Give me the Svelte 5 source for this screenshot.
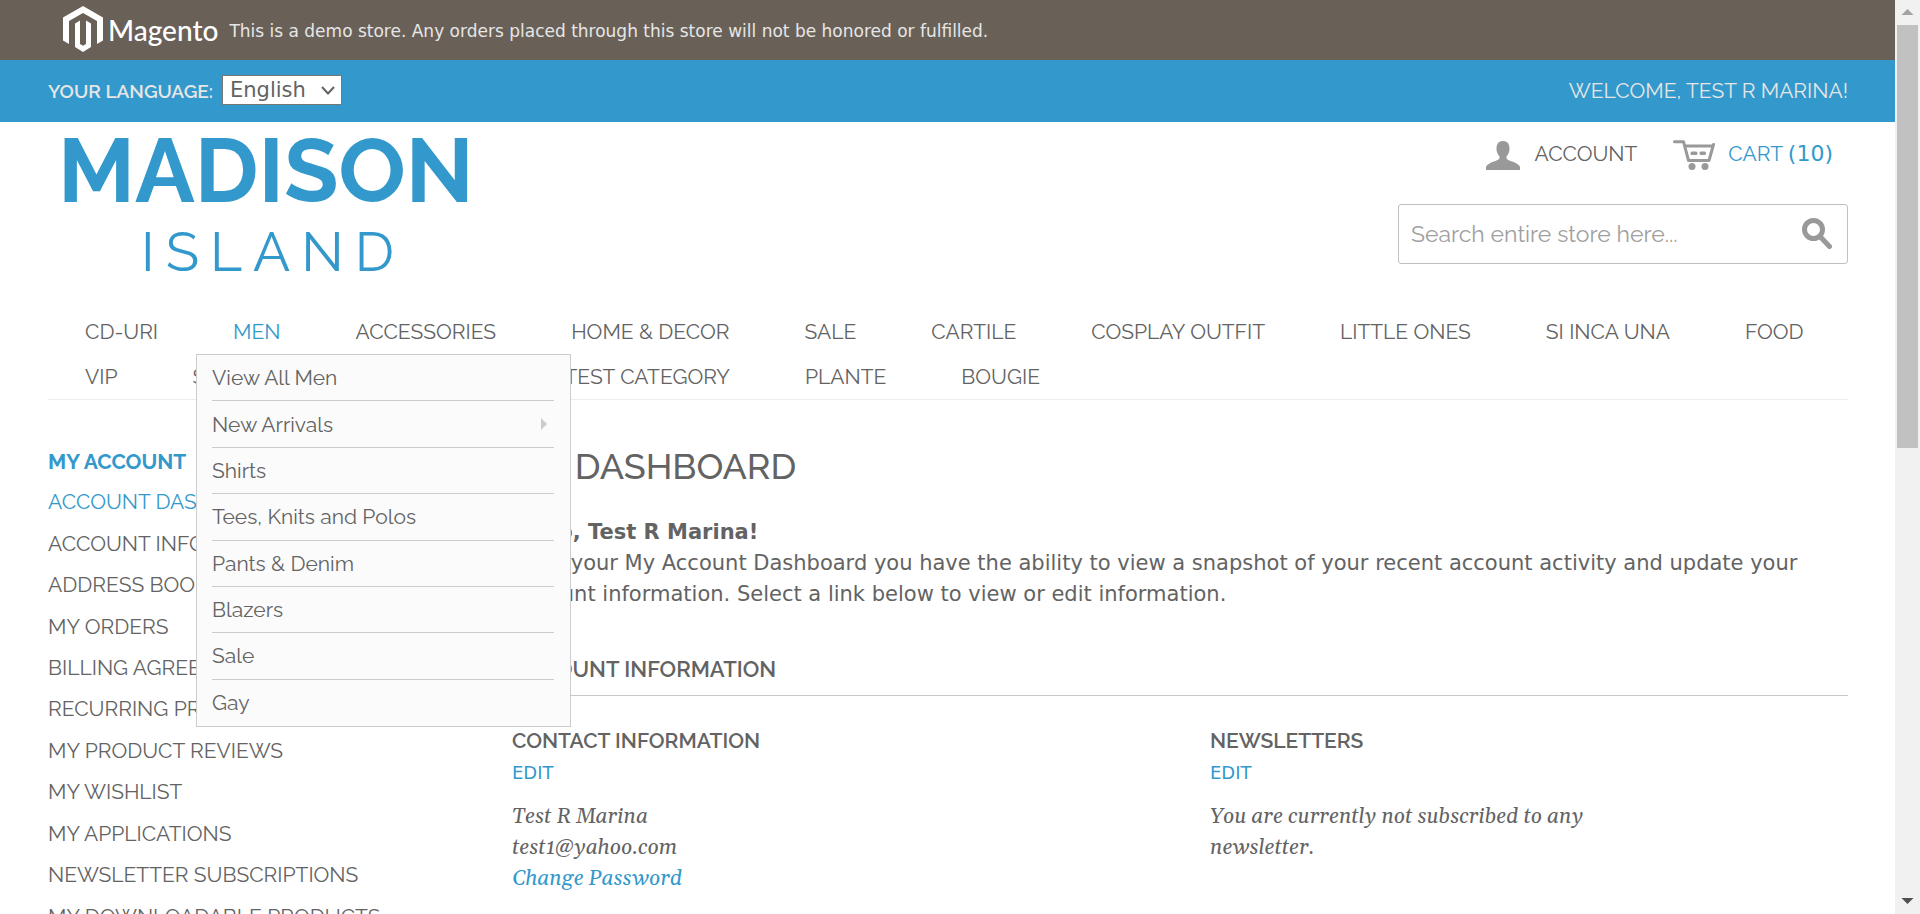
<script>
  const nav = [
    'CD-URI', 'MEN', 'ACCESSORIES', 'HOME & DECOR', 'SALE', 'CARTILE', 'COSPLAY OUTFIT',
    'LITTLE ONES', 'SI INCA UNA', 'FOOD', 'VIP', 'SPECIAL OFFERS', 'TOYS', 'TEST CATEGORY', 'PLANTE', 'BOUGIE'
  ];
  const menMenu = [
    'View All Men', 'New Arrivals', 'Shirts', 'Tees, Knits and Polos',
    'Pants & Denim', 'Blazers', 'Sale', 'Gay'
  ];
  const accountLinks = [
    'ACCOUNT DASHBOARD', 'ACCOUNT INFORMATION', 'ADDRESS BOOK', 'MY ORDERS', 'BILLING AGREEMENTS',
    'RECURRING PROFILES', 'MY PRODUCT REVIEWS', 'MY WISHLIST', 'MY APPLICATIONS',
    'NEWSLETTER SUBSCRIPTIONS', 'MY DOWNLOADABLE PRODUCTS'
  ];
  let language = $state('English');
  let query = $state('');
</script>

<div class="window">
  <div class="page">
    <div class="notice">
      <svg class="mark" width="40" height="46" viewBox="0 0 40 46" aria-hidden="true">
        <path fill="#fff" d="M20 0 40 11.500V34.500L34 38V15L20 7 6 15V38L0 34.500V11.500Z" />
        <path fill="#fff" d="M12 17.500 17 14.600V38L20 39.800 23 38V14.600L28 17.500V41L20 46 12 41Z" />
      </svg>
      <span class="wordmark">Magento</span>
      <p>This is a demo store. Any orders placed through this store will not be honored or fulfilled.</p>
    </div>

    <div class="langbar">
      <div class="wrap bar">
        <div class="lang">
          <label for="lang">YOUR LANGUAGE:</label>
          <span class="selectbox">
            <select id="lang" bind:value={language}>
              <option>English</option>
              <option>French</option>
              <option>German</option>
            </select>
            <svg width="14" height="9" viewBox="0 0 14 9" aria-hidden="true"><path d="M1 1 7 7.500 13 1" fill="none" stroke="#636363" stroke-width="2" /></svg>
          </span>
        </div>
        <p>WELCOME, TEST R MARINA!</p>
      </div>
    </div>

    <header class="wrap header">
      <a class="logo" href="#home">
        <span class="madison">MADISON</span>
        <span class="island">ISLAND</span>
      </a>
      <div class="tools">
        <div class="links">
          <a href="#account">
            <svg width="34" height="29" viewBox="0 0 34 29" aria-hidden="true"><path fill="#999" d="M17 0C21.500 0 23.500 3 23.500 7.500C23.500 12 21.500 14 20.500 15.500C20 18.500 22 19 26 20.500C30.500 22 34 24 34 26.500V29H0V26.500C0 24 3.500 22 8 20.500C12 19 14 18.500 13.500 15.500C12.500 14 10.500 12 10.500 7.500C10.500 3 12.500 0 17 0Z" /></svg>
            <span>ACCOUNT</span>
          </a>
          <a class="cart" href="#cart">
            <svg width="42" height="30" viewBox="0 0 42 30" aria-hidden="true">
              <path d="M1.500 1.700H10.500L15.500 20.500H36L40.500 4.500M12 6H40" fill="none" stroke="#999" stroke-width="3" stroke-linecap="round" stroke-linejoin="round" />
              <rect x="17.500" y="11.500" width="7" height="3.500" rx="1.500" fill="#999" /><rect x="26.500" y="11.500" width="6.500" height="3.500" rx="1.500" fill="#999" />
              <circle cx="19" cy="26.500" r="3.500" fill="#999" /><circle cx="32" cy="26.500" r="3.500" fill="#999" />
            </svg>
            <span>CART <b>(10)</b></span>
          </a>
        </div>
        <form class="search" onsubmit={(e) => e.preventDefault()}>
          <input type="search" aria-label="Search" placeholder="Search entire store here..." bind:value={query} />
          <button type="submit" aria-label="Search">
            <svg width="30" height="31" viewBox="0 0 30 31" aria-hidden="true"><circle cx="11.500" cy="11.500" r="9" fill="none" stroke="#999" stroke-width="5" /><path d="M18.500 19 27.500 28.500" stroke="#999" stroke-width="5" stroke-linecap="round" /></svg>
          </button>
        </form>
      </div>
    </header>

    <nav class="wrap">
      <ul class="nav">
        {#each nav as item}
          <li>
            <a class:active={item === 'MEN'} href="#{item}">{item}</a>
            {#if item === 'MEN'}
              <ul class="menu">
                {#each menMenu as entry}
                  <li>
                    <a href="#{entry}">{entry}</a>
                    {#if entry === 'New Arrivals'}<i class="arrow"></i>{/if}
                  </li>
                {/each}
              </ul>
            {/if}
          </li>
        {/each}
      </ul>
    </nav>

    <div class="wrap columns">
      <aside>
        <h2>MY ACCOUNT</h2>
        <ul>
          {#each accountLinks as link, i}
            <li><a class:active={i === 0} href="#{link}">{link}</a></li>
          {/each}
        </ul>
      </aside>
      <main>
        <h1>MY DASHBOARD</h1>
        <p class="hello">Hello, Test R Marina!</p>
        <p class="intro">From your My Account Dashboard you have the ability to view a snapshot of your recent account activity and update your account information. Select a link below to view or edit information.</p>
        <h2>ACCOUNT INFORMATION</h2>
        <div class="boxes">
          <section>
            <h3>CONTACT INFORMATION</h3>
            <a class="edit" href="#edit-contact">EDIT</a>
            <p>Test R Marina<br />test1@yahoo.com<br /><a href="#password">Change Password</a></p>
          </section>
          <section>
            <h3>NEWSLETTERS</h3>
            <a class="edit" href="#edit-newsletter">EDIT</a>
            <p>You are currently not subscribed to any newsletter.</p>
          </section>
        </div>
      </main>
    </div>
  </div>

  <div class="scrollbar" aria-hidden="true">
    <svg width="25" height="25" viewBox="0 0 25 25"><path fill="#a3a3a3" d="M6.500 15H18.500L12.500 9Z" /></svg>
    <div class="track"><div class="thumb"></div></div>
    <svg width="25" height="25" viewBox="0 0 25 25"><path fill="#505050" d="M6.500 9H18.500L12.500 15Z" /></svg>
  </div>
</div>

<style>
  :global(body) { background: #fff; }
  .window {
    --blue: #3399cc;
    --head: Raleway, Lato, "Open Sans", sans-serif;
    --body: Verdana, "DejaVu Sans", sans-serif;
    display: flex;
    height: 100vh;
    overflow: hidden;
    color: #636363;
    font: 21px/31px var(--head);
  }
  .page { flex: 1; min-width: 0; overflow: hidden; }
  .wrap { margin: 0 47px 0 48px; }
  h1, h2, h3, p, ul { margin: 0; padding: 0; }
  ul { list-style: none; }
  a { color: inherit; text-decoration: none; }
  .active { color: var(--blue); }

  .notice {
    display: flex;
    align-items: center;
    height: 60px;
    padding-left: 63px;
    background: #696158;
    color: #e6e6e6;
  }
  .mark { margin-bottom: 3px; }
  .wordmark { margin: 0 11px 0 5px; color: #fff; font: 500 28px/40px Lato, sans-serif; }
  .notice p { padding-top: 2px; font: 17px/30px var(--body); }

  .langbar { background: var(--blue); color: #e6e6e6; }
  .bar { display: flex; justify-content: space-between; align-items: center; height: 60px; padding-bottom: 2px; }
  .lang { display: flex; align-items: center; gap: 9px; font-size: 19px; font-weight: 600; }
  .lang label { padding-top: 2px; }
  .selectbox { position: relative; display: flex; }
  .selectbox svg { position: absolute; right: 7px; top: 11px; pointer-events: none; }
  select {
    appearance: none;
    width: 120px;
    height: 30px;
    padding: 0 7px;
    border: 1px solid #767676;
    border-radius: 0;
    background: #fff;
    color: #636363;
    font: 21px/28px var(--body);
  }

  .header { display: flex; justify-content: space-between; height: 187px; }
  .logo { display: flex; flex-direction: column; padding: 2px 0 0 10px; color: var(--blue); }
  .madison { font-size: 89px; line-height: 94px; font-weight: 700; }
  .island { padding-left: 83px; font-size: 55px; line-height: 68px; font-weight: 400; letter-spacing: 11px; }
  .tools { display: flex; flex-direction: column; width: 450px; }
  .links { display: flex; justify-content: flex-end; gap: 36px; padding: 17px 15px 0 0; }
  .links a { display: flex; align-items: center; gap: 15px; height: 32px; line-height: 28px; }
  .links span { padding-bottom: 3px; }
  .links .cart { gap: 13px; color: var(--blue); }
  .links b { font: 500 22px/28px var(--body); }
  .search { display: flex; align-items: center; height: 58px; margin-top: 33px; border: 1px solid #c0c0c0; border-radius: 3px; }
  .search input { flex: 1; min-width: 0; padding: 0 12px; border: 0; background: none; outline: 0; font: 23px/30px var(--head); color: #636363; }
  .search input::placeholder { color: #a0a0a0; opacity: 1; }
  .search button { display: flex; margin: 0; padding: 0 15px 2px; border: 0; background: none; }

  .nav { display: flex; flex-wrap: wrap; border-bottom: 1px solid #ededed; line-height: 45px; }
  .nav > li { position: relative; padding: 0 38px 0 37px; }
  .nav > li > a { display: block; }
  .menu {
    position: absolute;
    z-index: 2;
    top: 45px;
    left: 0;
    box-sizing: border-box;
    display: grid;
    grid-auto-rows: 1fr;
    width: 375px;
    min-height: 373px;
    padding: 0 16px 0 15px;
    border: 1px solid #ccc;
    background: #fbfbfb;
  }
  .menu li { display: flex; align-items: center; justify-content: space-between; padding-right: 7px; border-bottom: 1px solid #ccc; }
  .menu li:last-child { border-bottom: 0; }
  .arrow { border: 6px solid transparent; border-left-color: #ccc; border-right: 0; }

  .columns { display: flex; }
  aside { width: 464px; padding-top: 46px; }
  aside h2 { font-size: 21px; line-height: 31px; font-weight: 700; color: var(--blue); }
  aside ul { display: grid; grid-auto-rows: 1fr; min-height: 456px; margin-top: 4px; }
  aside li { display: flex; align-items: center; }
  main { flex: 1; min-width: 0; padding-top: 45px; }
  h1 { font-size: 36px; line-height: 42px; font-weight: 500; }
  .hello, .intro { font-family: var(--body); }
  .hello { margin-top: 30px; font-weight: 700; }
  main h2 { margin-top: 42px; padding: 0 0 9px; border-bottom: 1px solid #c7c7c7; font-size: 22px; line-height: 34px; font-weight: 600; }
  .boxes { display: grid; grid-template-columns: 1fr 1fr; gap: 60px; padding-top: 29px; }
  .boxes h3 { font-size: 21px; line-height: 31px; font-weight: 600; }
  .edit { display: block; color: var(--blue); font: 18px/34px var(--body); }
  .boxes p { max-width: 450px; margin-top: 12px; font: italic 21px/31px Georgia, Gelasio, "Liberation Serif", serif; }
  .boxes p a { color: var(--blue); }

  .scrollbar { display: flex; flex-direction: column; width: 25px; background: #f1f1f1; }
  .track { flex: 1; }
  .thumb { height: 49%; margin: 0 2px; background: #c1c1c1; }
</style>
